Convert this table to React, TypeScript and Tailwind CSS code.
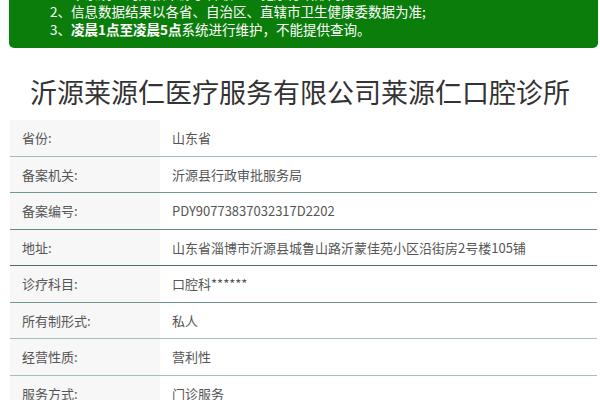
const rows = [
  { label: '省份:', value: '山东省', line: '#9dbfba' },
  { label: '备案机关:', value: '沂源县行政审批服务局', line: '#6f9892' },
  { label: '备案编号:', value: 'PDY90773837032317D2202', line: '#5f8a84' },
  { label: '地址:', value: '山东省淄博市沂源县城鲁山路沂蒙佳苑小区沿街房2号楼105铺', line: '#46706a' },
  { label: '诊疗科目:', value: '口腔科******', line: '#6f9690' },
  { label: '所有制形式:', value: '私人', line: '#a6bfbc' },
  { label: '经营性质:', value: '营利性', line: '#a6bfbc' },
  { label: '服务方式:', value: '门诊服务', line: '#a6bfbc' },
];

export default function App() {
  return (
    <div
      className="w-[600px] h-[400px] overflow-hidden bg-white"
      style={{ fontFamily: '"Noto Sans CJK SC", "Noto Sans", sans-serif' }}
    >
      <div className="ml-[9px] mr-[2px] mt-[-16px] rounded-b-[5px] bg-[#0b7d0b] pl-[41px] pb-[10px] text-[13.5px] leading-[18px] text-white">
        <p>1、本系统查询数据来源于各级卫生健康行政部门;</p>
        <p>2、信息数据结果以各省、自治区、直辖市卫生健康委数据为准;</p>
        <p>
          3、<span className="font-bold">凌晨1点至凌晨5点</span>系统进行维护，不能提供查询。
        </p>
      </div>

      <h1 className="mt-[26px] mb-[10px] text-center text-[27px] leading-[36px] text-[#333]">
        沂源莱源仁医疗服务有限公司莱源仁口腔诊所
      </h1>

      <div className="ml-[10px] mr-[3px]">
        {rows.map((row) => (
          <div
            key={row.label}
            className="flex h-[36.5px] border-b text-[13px] text-[#555]"
            style={{ borderColor: row.line }}
          >
            <div className="flex w-[150px] shrink-0 items-center bg-[#f7f7f7] pl-[12px]">{row.label}</div>
            <div className="flex flex-1 items-center pl-[12px]">{row.value}</div>
          </div>
        ))}
      </div>
    </div>
  );
}
